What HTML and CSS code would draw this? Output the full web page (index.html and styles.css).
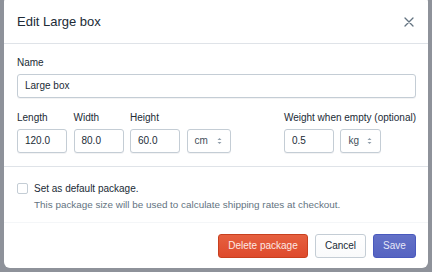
FILE: index.html
```html
<!DOCTYPE html>
<html>
<head>
<meta charset="utf-8">
<link rel="stylesheet" href="styles.css">
</head>
<body>
<div class="modal">
  <div class="header">
    <div class="title">Edit Large box</div>
    <svg class="close" width="10" height="10" viewBox="0 0 10 10"><path d="M1 1L9 9M9 1L1 9" stroke="#637381" stroke-width="1.3" stroke-linecap="round"/></svg>
  </div>
  <div class="section form">
    <div class="field">
      <div class="label">Name</div>
      <div class="input wide">Large box</div>
    </div>
    <div class="row">
      <div class="group">
        <div class="field">
          <div class="label">Length</div>
          <div class="input num">120.0</div>
        </div>
        <div class="field">
          <div class="label">Width</div>
          <div class="input num">80.0</div>
        </div>
        <div class="field">
          <div class="label">Height</div>
          <div class="input num">60.0</div>
        </div>
        <div class="field">
          <div class="label">&nbsp;</div>
          <div class="input select cm">cm<svg class="arrows" width="5" height="8" viewBox="0 0 5 8"><path d="M0.5 3L2.5 1L4.5 3Z M0.5 5L2.5 7L4.5 5Z" fill="#919eab"/></svg></div>
        </div>
      </div>
      <div class="field">
        <div class="label">Weight when empty (optional)</div>
        <div class="group">
          <div class="input num">0.5</div>
          <div class="input select kg">kg<svg class="arrows" width="5" height="8" viewBox="0 0 5 8"><path d="M0.5 3L2.5 1L4.5 3Z M0.5 5L2.5 7L4.5 5Z" fill="#919eab"/></svg></div>
        </div>
      </div>
    </div>
  </div>
  <div class="section check">
    <div class="checkrow">
      <div class="box"></div>
      <div class="checktext">
        <div class="cl">Set as default package.</div>
        <div class="help">This package size will be used to calculate shipping rates at checkout.</div>
      </div>
    </div>
  </div>
  <div class="footer">
    <div class="btn danger">Delete package</div>
    <div class="btn plain">Cancel</div>
    <div class="btn primary">Save</div>
  </div>
</div>
</body>
</html>
```
FILE: styles.css
```css
* { box-sizing: border-box; }
html, body { margin: 0; padding: 0; }
body {
  width: 432px;
  height: 272px;
  overflow: hidden;
  background: #8e929a;
  font-family: "Liberation Sans", Arial, sans-serif;
  color: #212b36;
}
.modal {
  margin: -4px 0 0 4px;
  width: 424px;
  height: 272px;
  background: #fff;
  border-radius: 6px;
  display: flex;
  flex-direction: column;
}
.header {
  height: 48px;
  padding: 4px 14px 0 13px;
  display: flex;
  align-items: center;
  justify-content: space-between;
  border-bottom: 1px solid #dfe3e8;
  flex: none;
}
.title { font-size: 13px; color: #212b36; }
.close { display: block; }
.section { padding: 0 12px 0 13px; }
.form {
  padding-top: 12px;
  padding-bottom: 13px;
  border-bottom: 1px solid #dfe3e8;
  display: flex;
  flex-direction: column;
  gap: 13px;
}
.field { display: flex; flex-direction: column; gap: 4px; }
.label { font-size: 10px; line-height: 14px; color: #212b36; }
.input {
  height: 24px;
  border: 1px solid #c4cdd5;
  border-radius: 3px;
  box-shadow: 0 1px 0 rgba(22,29,37,0.05);
  font-size: 10px;
  line-height: 22px;
  padding: 0 7px;
  color: #212b36;
  background: #fff;
}
.num { width: 50px; }
.row { display: flex; justify-content: space-between; align-items: flex-start; }
.group { display: flex; gap: 6.5px; align-items: flex-end; }
.select {
  display: flex;
  align-items: center;
  justify-content: space-between;
  color: #454f5b;
  padding: 0 8px 0 7px;
}
.cm { width: 44px; }
.kg { width: 41px; }
.arrows { display: block; }
.check {
  padding-top: 15px;
  padding-bottom: 11px;
  border-bottom: 1px solid #f4f6f8;
  flex: none;
}
.checkrow { display: flex; gap: 6px; align-items: flex-start; }
.box {
  width: 11px;
  height: 11px;
  margin-top: 1px;
  border: 1px solid #c4cdd5;
  border-radius: 2px;
  background: #fff;
  flex: none;
}
.checktext { display: flex; flex-direction: column; gap: 3px; }
.cl { font-size: 10px; line-height: 13px; color: #212b36; }
.help { font-size: 9.9px; line-height: 13px; color: #637381; }
.footer {
  padding: 11px 12px 0 0;
  display: flex;
  justify-content: flex-end;
  gap: 7px;
}
.btn {
  height: 24px;
  border-radius: 3px;
  font-size: 10px;
  line-height: 22px;
  padding: 0;
  border: 1px solid;
  white-space: nowrap;
  text-align: center;
}
.danger {
  width: 90px;
  background: linear-gradient(#e6603f, #de4a2c);
  border-color: #c8401f;
  color: #fde9e4;
}
.plain {
  width: 51px;
  background: linear-gradient(#fff, #f9fafb);
  border-color: #c4cdd5;
  color: #212b36;
}
.primary {
  width: 43px;
  background: linear-gradient(#6371c7, #5563c1);
  border-color: #4959bd;
  color: #e6e8f7;
}
```
